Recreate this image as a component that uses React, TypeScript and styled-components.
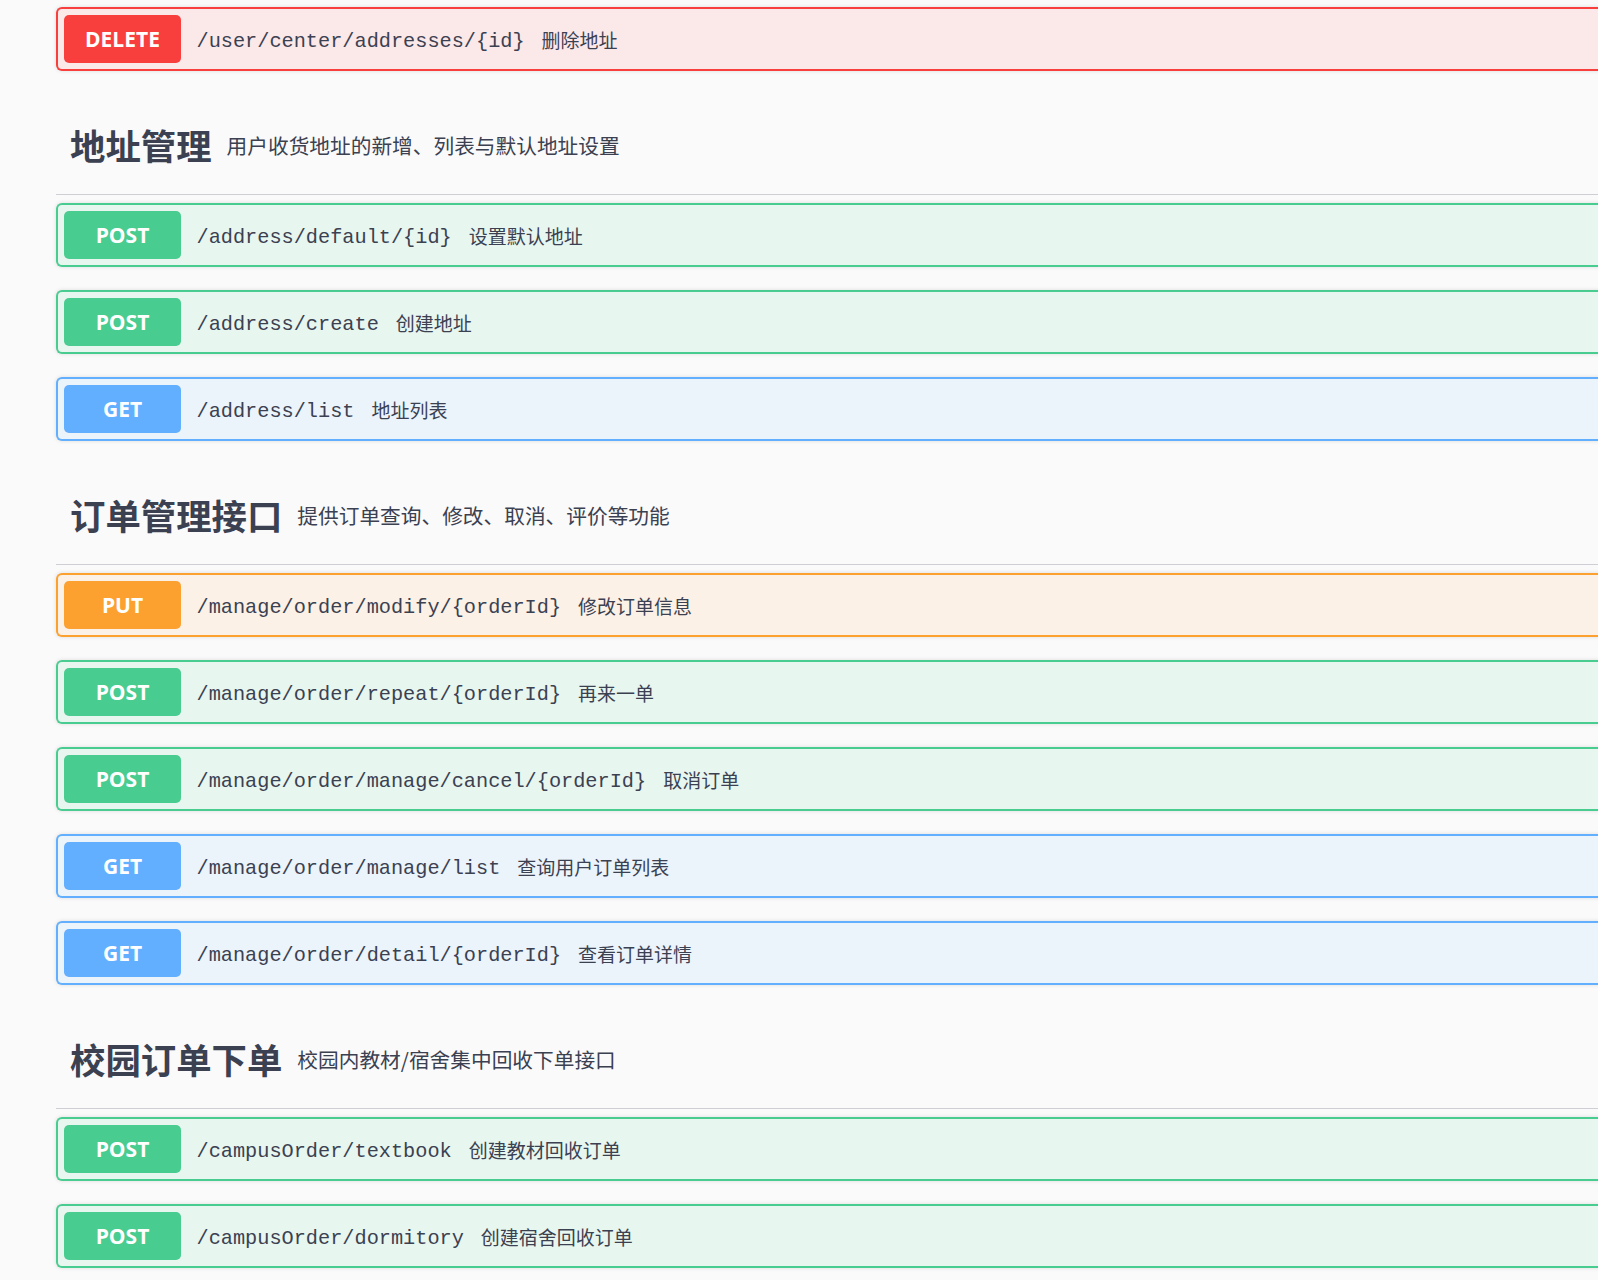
import styled, { createGlobalStyle } from "styled-components"

type Method = "GET" | "POST" | "PUT" | "DELETE"

const colors: Record<Method, string> = {
  GET: "#61affe",
  POST: "#49cc90",
  PUT: "#fca130",
  DELETE: "#f93e3e",
}

const tints: Record<Method, string> = {
  GET: "#ebf3fb",
  POST: "#e8f6f0",
  PUT: "#fbf1e7",
  DELETE: "#fbe8e9",
}

type Op = { method: Method; path: string; desc: string }
type Tag = { title: string; sub: string; ops: Op[] }

const tags: Tag[] = [
  {
    title: "地址管理",
    sub: "用户收货地址的新增、列表与默认地址设置",
    ops: [
      { method: "POST", path: "/address/default/{id}", desc: "设置默认地址" },
      { method: "POST", path: "/address/create", desc: "创建地址" },
      { method: "GET", path: "/address/list", desc: "地址列表" },
    ],
  },
  {
    title: "订单管理接口",
    sub: "提供订单查询、修改、取消、评价等功能",
    ops: [
      { method: "PUT", path: "/manage/order/modify/{orderId}", desc: "修改订单信息" },
      { method: "POST", path: "/manage/order/repeat/{orderId}", desc: "再来一单" },
      { method: "POST", path: "/manage/order/manage/cancel/{orderId}", desc: "取消订单" },
      { method: "GET", path: "/manage/order/manage/list", desc: "查询用户订单列表" },
      { method: "GET", path: "/manage/order/detail/{orderId}", desc: "查看订单详情" },
    ],
  },
  {
    title: "校园订单下单",
    sub: "校园内教材/宿舍集中回收下单接口",
    ops: [
      { method: "POST", path: "/campusOrder/textbook", desc: "创建教材回收订单" },
      { method: "POST", path: "/campusOrder/dormitory", desc: "创建宿舍回收订单" },
    ],
  },
]

const OpRow = ({ op }: { op: Op }) => (
  <Block $m={op.method}>
    <Badge $m={op.method}>{op.method}</Badge>
    <Path>{op.path}</Path>
    <Desc>{op.desc}</Desc>
  </Block>
)

const App = () => {
  return (
    <Page>
      <GlobalStyle />
      <List>
        <OpRow op={{ method: "DELETE", path: "/user/center/addresses/{id}", desc: "删除地址" }} />
        {tags.map((t) => (
          <Section key={t.title}>
            <TagHeader>
              <Title>{t.title}</Title>
              <Sub>{t.sub}</Sub>
            </TagHeader>
            {t.ops.map((op) => (
              <OpRow key={op.method + op.path} op={op} />
            ))}
          </Section>
        ))}
      </List>
    </Page>
  )
}

export default App

const GlobalStyle = createGlobalStyle`
  html, body {
    margin: 0;
    padding: 0;
    background: #fafafa;
    overflow: hidden;
  }
  body {
    font-family: "Noto Sans CJK SC", "Open Sans", sans-serif;
    color: #3b4151;
  }
`

const Page = styled.div`
  width: 100%;
  min-height: 1280px;
  padding: 7px 0 0 56px;
  box-sizing: border-box;
  overflow: hidden;
`

const List = styled.div`
  width: 1620px;
  display: flex;
  flex-direction: column;
`

const Section = styled.div`
  display: flex;
  flex-direction: column;
`

const TagHeader = styled.div`
  height: 101px;
  box-sizing: border-box;
  padding: 2px 0 0 14px;
  display: flex;
  align-items: center;
  border-bottom: 1px solid #cdcfd5;
  margin-bottom: 8px;
`

const Title = styled.h3`
  margin: 0;
  font-family: "Noto Sans CJK SC", sans-serif;
  font-size: 35.4px;
  font-weight: 700;
  line-height: 1.2;
  color: #3b4151;
`

const Sub = styled.small`
  margin-left: 15px;
  font-family: "Noto Sans CJK SC", sans-serif;
  font-size: 20.7px;
  font-weight: 400;
  color: #3b4151;
`

const Block = styled.div<{ $m: Method }>`
  display: flex;
  align-items: center;
  height: 64px;
  box-sizing: border-box;
  padding: 0 6px;
  margin-bottom: 23px;
  border: 2px solid ${(p) => colors[p.$m]};
  border-right: none;
  border-radius: 6px 0 0 6px;
  background: ${(p) => tints[p.$m]};
  box-shadow: 0 0 4px rgba(0, 0, 0, 0.12);
`

const Badge = styled.div<{ $m: Method }>`
  width: 117px;
  height: 48px;
  flex-shrink: 0;
  display: flex;
  align-items: center;
  justify-content: center;
  border-radius: 5px;
  background: ${(p) => colors[p.$m]};
  color: #fff;
  font-family: "Open Sans", "Noto Sans", sans-serif;
  font-size: 21px;
  font-weight: 700;
`

const Path = styled.span`
  margin: 4px 0 0 15.5px;
  font-family: "Liberation Mono", monospace;
  font-size: 20.25px;
  color: #3b4151;
  white-space: nowrap;
`

const Desc = styled.span`
  margin-left: 17px;
  font-family: "Noto Sans CJK SC", sans-serif;
  font-size: 19px;
  color: #3b4151;
  white-space: nowrap;
`
